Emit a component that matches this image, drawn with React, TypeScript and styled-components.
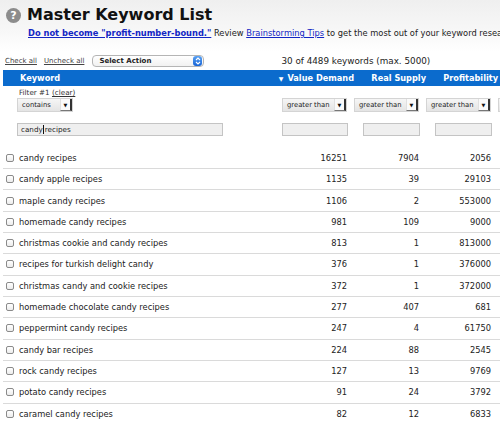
import React from "react";
import styled, { createGlobalStyle } from "styled-components";

const GlobalStyle = createGlobalStyle`
  html, body { margin: 0; padding: 0; }
  body {
    width: 500px;
    height: 423px;
    overflow: hidden;
    background: #fff;
    font-family: "DejaVu Sans", Verdana, sans-serif;
    color: #222;
  }
`;

const Page = styled.div`
  width: 500px;
  height: 423px;
  overflow: hidden;
  background: linear-gradient(#efefef 0px, #f7f7f7 30px, #ffffff 52px);
`;

const TitleRow = styled.div`
  display: flex;
  align-items: center;
  gap: 6px;
  height: 16px;
  padding: 7px 0 0 6px;
`;

const HelpIcon = styled.span`
  display: flex;
  align-items: center;
  justify-content: center;
  width: 15px;
  height: 15px;
  border-radius: 50%;
  background: #8c8c8c;
  color: #fff;
  font-weight: bold;
  font-size: 11px;
  line-height: 1;
`;

const Title = styled.h1`
  margin: 0;
  font-size: 16px;
  line-height: 16px;
  font-weight: bold;
  color: #111;
`;

const TipLine = styled.div`
  height: 12px;
  margin-top: 4px;
  padding-left: 28px;
  font-size: 8.3px;
  line-height: 12px;
  white-space: nowrap;
  color: #222;
`;

const Link = styled.a<{ $bold?: boolean }>`
  color: #1226c4;
  text-decoration: underline;
  font-weight: ${(p) => (p.$bold ? "bold" : "normal")};
`;

const ToolRow = styled.div`
  display: flex;
  align-items: center;
  height: 14px;
  margin-top: 15px;
  padding-left: 5px;
  white-space: nowrap;
`;

const GrayLink = styled.a<{ $gap?: number }>`
  font-size: 7px;
  color: #444;
  text-decoration: underline;
  margin-left: ${(p) => p.$gap ?? 0}px;
`;

const ActionSelect = styled.div`
  display: flex;
  align-items: center;
  justify-content: space-between;
  box-sizing: border-box;
  width: 112px;
  height: 12px;
  margin-left: 8px;
  padding: 0 1px 0 6px;
  border: 1px solid #b5b5b5;
  border-radius: 4px;
  background: linear-gradient(#ffffff, #f1f1f1);
  font-size: 7px;
  font-weight: bold;
  color: #222;
`;

const Stepper = styled.span`
  display: flex;
  align-items: center;
  justify-content: center;
  width: 9px;
  height: 10px;
  border-radius: 3px;
  background: linear-gradient(#5aa2f3, #1663d6);
`;

const Count = styled.span`
  margin-left: 77px;
  font-size: 8.8px;
  color: #222;
`;

const Table = styled.div`
  margin-top: 2px;
  margin-left: 3px;
  width: 565px;
`;

const cols = "277px repeat(4, 72px)";

const HeaderRow = styled.div`
  display: grid;
  grid-template-columns: ${cols};
  height: 16px;
  align-items: center;
  background: #0b6bcd;
  color: #fff;
  font-weight: bold;
  font-size: 8.2px;
  white-space: nowrap;
`;

const HeadCell = styled.div<{ $first?: boolean }>`
  display: flex;
  align-items: center;
  justify-content: ${(p) => (p.$first ? "flex-start" : "flex-end")};
  padding-left: ${(p) => (p.$first ? "17px" : "0")};
  margin-right: ${(p) => (p.$first ? "0" : "-2px")};
  gap: 4px;
`;

const SortArrow = styled.span`
  font-size: 6px;
`;

const FilterRow = styled.div`
  display: grid;
  grid-template-columns: ${cols};
  height: 61.7px;
`;

const FilterCell = styled.div<{ $first?: boolean }>`
  display: flex;
  flex-direction: column;
  align-items: flex-start;
  padding: ${(p) => (p.$first ? "1px 0 0 14px" : "12px 4px 0 2px")};
`;

const FilterLabel = styled.div`
  height: 11px;
  padding-left: 2px;
  font-size: 7.2px;
  line-height: 11px;
  color: #333;
  white-space: nowrap;
`;

const ClearLink = styled.a`
  color: #333;
  text-decoration: underline;
`;

const Select = styled.div<{ $w: number }>`
  display: flex;
  align-items: stretch;
  justify-content: space-between;
  box-sizing: border-box;
  width: ${(p) => p.$w}px;
  height: 14px;
  background: linear-gradient(#f6f6f6, #e4e4e4);
  border: 1px solid #d4d4d4;
  font-size: 6.8px;
  color: #222;
`;

const SelectText = styled.span`
  display: flex;
  align-items: center;
  padding-left: 4px;
  white-space: nowrap;
`;

const SelectArrow = styled.span`
  display: flex;
  align-items: center;
  justify-content: center;
  width: 9px;
  background: #fafafa;
  border-left: 1px solid #e0e0e0;
  border-right: 2px solid #333;
  border-bottom: 1px solid #777;
  font-size: 5px;
  color: #111;
`;

const TextInput = styled.div<{ $w: number; $right?: boolean }>`
  display: flex;
  align-items: center;
  box-sizing: border-box;
  width: ${(p) => p.$w}px;
  height: 13px;
  margin-top: 11px;
  align-self: ${(p) => (p.$right ? "flex-end" : "flex-start")};
  padding-left: 3px;
  background: #efefef;
  border: 1px solid #c4c4c4;
  font-size: 7.2px;
  color: #222;
  white-space: nowrap;
`;

const Caret = styled.span`
  display: inline-block;
  width: 1px;
  height: 9px;
  margin: 0 0.5px;
  background: #111;
`;

const Row = styled.div`
  display: grid;
  grid-template-columns: ${cols};
  align-items: center;
  box-sizing: border-box;
  height: 21.33px;
  border-bottom: 1px solid #dadada;
  font-size: 8.3px;
  color: #222;
  white-space: nowrap;
`;

const KeywordCell = styled.div`
  display: flex;
  align-items: center;
  gap: 5px;
  padding-left: 3px;
`;

const Check = styled.span`
  box-sizing: border-box;
  width: 8px;
  height: 8px;
  border: 1px solid #8a8a8a;
  border-radius: 2px;
  background: linear-gradient(#fff, #ececec);
`;

const NumCell = styled.div`
  text-align: right;
  padding-right: 5px;
`;

const rows: [string, number, number, number][] = [
  ["candy recipes", 16251, 7904, 2056],
  ["candy apple recipes", 1135, 39, 29103],
  ["maple candy recipes", 1106, 2, 553000],
  ["homemade candy recipes", 981, 109, 9000],
  ["christmas cookie and candy recipes", 813, 1, 813000],
  ["recipes for turkish delight candy", 376, 1, 376000],
  ["christmas candy and cookie recipes", 372, 1, 372000],
  ["homemade chocolate candy recipes", 277, 407, 681],
  ["peppermint candy recipes", 247, 4, 61750],
  ["candy bar recipes", 224, 88, 2545],
  ["rock candy recipes", 127, 13, 9769],
  ["potato candy recipes", 91, 24, 3792],
  ["caramel candy recipes", 82, 12, 6833],
];

const numericFilters = [
  { w: 66 },
  { w: 57 },
  { w: 57 },
  { w: 57 },
];

function FakeSelect({ w, label }: { w: number; label: string }) {
  return (
    <Select $w={w}>
      <SelectText>{label}</SelectText>
      <SelectArrow>▼</SelectArrow>
    </Select>
  );
}

export default function App() {
  return (
    <Page>
      <GlobalStyle />
      <TitleRow>
        <HelpIcon>?</HelpIcon>
        <Title>Master Keyword List</Title>
      </TitleRow>
      <TipLine>
        <Link $bold href="#">Do not become "profit-number-bound."</Link> Review{" "}
        <Link href="#">Brainstorming Tips</Link> to get the most out of your keyword research.
      </TipLine>
      <ToolRow>
        <GrayLink href="#">Check all</GrayLink>
        <GrayLink href="#" $gap={7}>Uncheck all</GrayLink>
        <ActionSelect>
          <span>Select Action</span>
          <Stepper>
            <svg width="6" height="8" viewBox="0 0 6 8">
              <path d="M1 3 L3 1 L5 3 M1 5 L3 7 L5 5" fill="none" stroke="#fff" strokeWidth="1.1" />
            </svg>
          </Stepper>
        </ActionSelect>
        <Count>30 of 4489 keywords (max. 5000)</Count>
      </ToolRow>
      <Table>
        <HeaderRow>
          <HeadCell $first>Keyword</HeadCell>
          <HeadCell>
            <SortArrow>▼</SortArrow>Value Demand
          </HeadCell>
          <HeadCell>Real Supply</HeadCell>
          <HeadCell>Profitability</HeadCell>
          <HeadCell />
        </HeaderRow>
        <FilterRow>
          <FilterCell $first>
            <FilterLabel>
              Filter #1 <ClearLink href="#">(clear)</ClearLink>
            </FilterLabel>
            <FakeSelect w={56} label="contains" />
            <TextInput $w={206}>
              candy<Caret />recipes
            </TextInput>
          </FilterCell>
          {numericFilters.map((f, i) => (
            <FilterCell key={i}>
              <FakeSelect w={65} label="greater than" />
              <TextInput $w={f.w} $right />
            </FilterCell>
          ))}
        </FilterRow>
        {rows.map(([kw, v, s, p]) => (
          <Row key={kw}>
            <KeywordCell>
              <Check />
              <span>{kw}</span>
            </KeywordCell>
            <NumCell>{v}</NumCell>
            <NumCell>{s}</NumCell>
            <NumCell>{p}</NumCell>
            <NumCell />
          </Row>
        ))}
      </Table>
    </Page>
  );
}
